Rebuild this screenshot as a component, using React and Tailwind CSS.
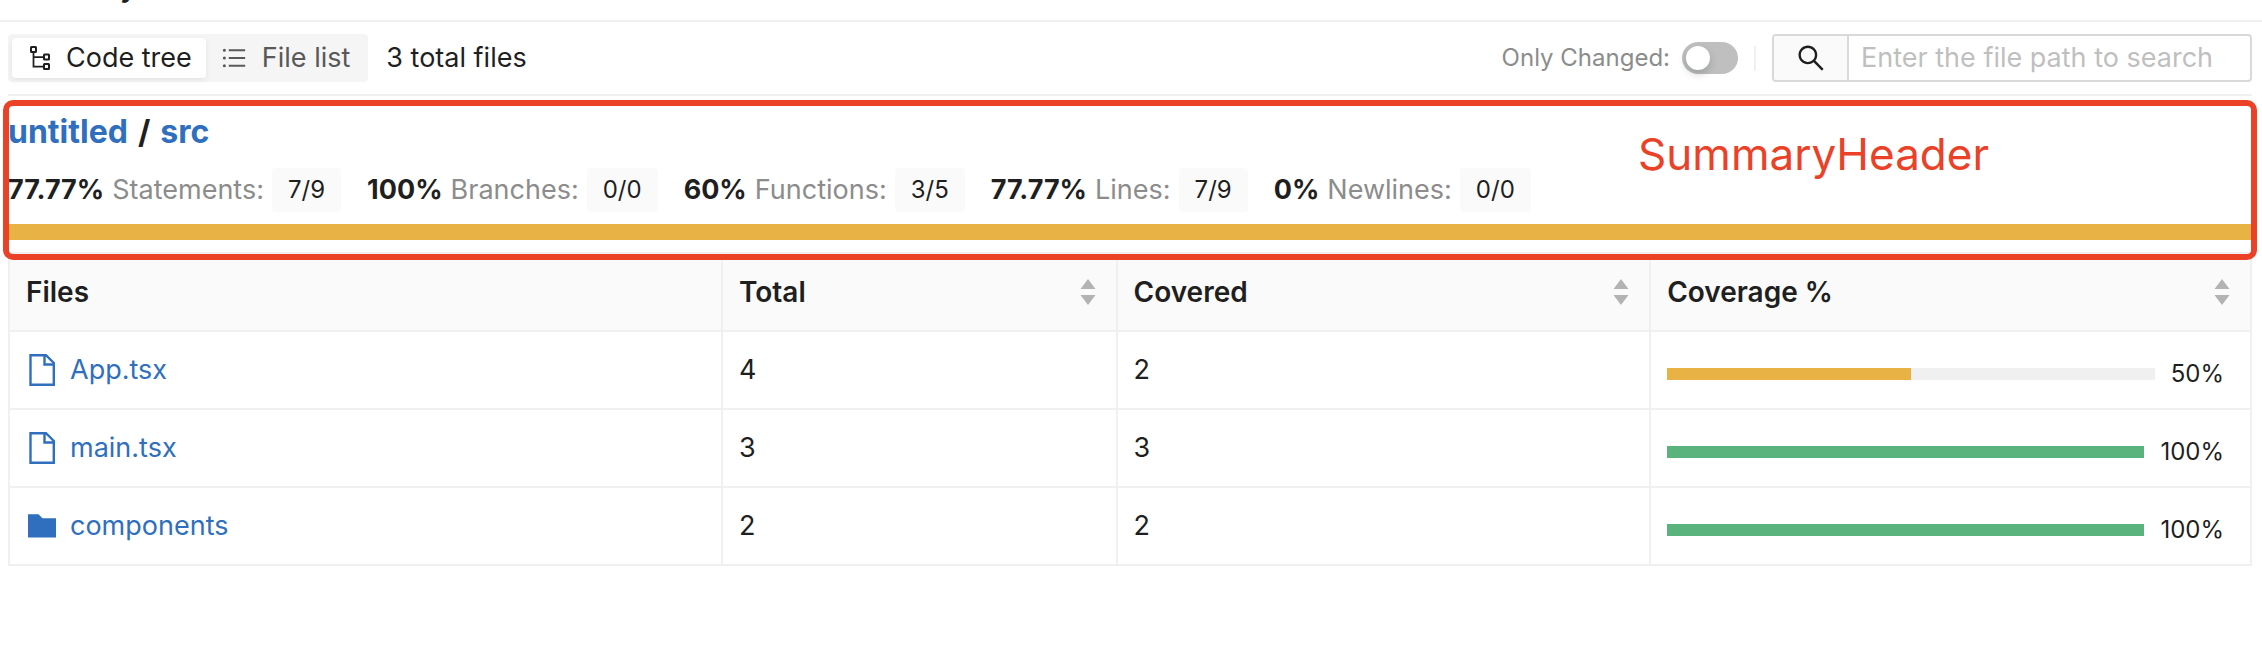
import React, { useState } from 'react';
import { AiOutlineSearch, AiOutlineUnorderedList } from 'react-icons/ai';

const summary = [
  { label: 'Statements', percent: '77.77%', ratio: '7/9' },
  { label: 'Branches', percent: '100%', ratio: '0/0' },
  { label: 'Functions', percent: '60%', ratio: '3/5' },
  { label: 'Lines', percent: '77.77%', ratio: '7/9' },
  { label: 'Newlines', percent: '0%', ratio: '0/0' },
];

const files = [
  { name: 'App.tsx', type: 'file', total: 4, covered: 2, percent: 50 },
  { name: 'main.tsx', type: 'file', total: 3, covered: 3, percent: 100 },
  { name: 'components', type: 'folder', total: 2, covered: 2, percent: 100 },
];

const TreeIcon = () => (
  <svg viewBox="0 0 20 24" className="h-6 w-5" fill="none" stroke="currentColor" strokeWidth="2">
    <rect x="1" y="1" width="5" height="5" rx="0.5" />
    <rect x="14" y="8.5" width="5" height="5" rx="0.5" />
    <rect x="14" y="18" width="5" height="5" rx="0.5" />
    <path d="M3.5 6v14.5H14M3.5 11H14" strokeWidth="1.75" />
  </svg>
);

const FileIcon = () => (
  <svg viewBox="0 0 32 32" className="h-8 w-8" fill="none" stroke="currentColor" strokeWidth="2.4">
    <path d="M4.5 1.2H20L27.8 9v21.8H4.5zM18.5 1v9.5h9" />
  </svg>
);

const FolderIcon = () => (
  <svg viewBox="0 0 32 32" className="h-8 w-8" fill="currentColor">
    <path d="M2 4.2h10.5l4 4H30v19.3H2z" />
  </svg>
);

const SortIcon = () => (
  <svg viewBox="0 0 16 26" className="h-[26px] w-4" fill="#b3b3b3">
    <path d="M8 0l7.5 10H.5zM8 26L.5 16h15z" />
  </svg>
);

const Toolbar = () => {
  const [view, setView] = useState('tree');
  const [onlyChanged, setOnlyChanged] = useState(false);
  const [keyword, setKeyword] = useState('');

  const tabClass = (active) =>
    active
      ? 'flex h-10 items-center rounded bg-white pl-[18px] pr-3.5 shadow-[0_2px_6px_rgba(0,0,0,0.08)]'
      : 'flex h-10 items-center rounded pl-3.5 pr-3.5 text-[#595959]';

  return (
    <div className="flex items-center justify-between border-b-2 border-[#f0f0f0] py-3 text-[27px]">
      <div className="flex items-center gap-[18px]">
        <div className="flex h-12 items-center rounded bg-[#f5f5f5] p-1">
          <button type="button" onClick={() => setView('tree')} className={tabClass(view === 'tree')}>
            <TreeIcon />
            <span className="ml-4">Code tree</span>
          </button>
          <button type="button" onClick={() => setView('list')} className={tabClass(view === 'list')}>
            <AiOutlineUnorderedList className="h-7 w-7" />
            <span className="ml-3.5">File list</span>
          </button>
        </div>
        <span>3 total files</span>
      </div>

      <div className="flex items-center">
        <label htmlFor="only-changed" className="mr-3 text-2xl text-[#8c8c8c]">
          Only Changed:
        </label>
        <input
          id="only-changed"
          type="checkbox"
          role="switch"
          checked={onlyChanged}
          onChange={(e) => setOnlyChanged(e.target.checked)}
          className="flex h-8 w-14 appearance-none rounded-full bg-[#bfbfbf] p-1 before:h-6 before:w-6 before:rounded-full before:bg-white before:shadow-[0_4px_8px_rgba(0,35,11,0.2)] checked:justify-end checked:bg-[#2f6fbd]"
        />
        <span className="mx-4 h-[25px] w-0.5 bg-[#f0f0f0]"></span>
        <div className="flex h-12 w-[480px] overflow-hidden rounded border-2 border-[#d9d9d9]">
          <button
            type="button"
            aria-label="Search"
            className="flex w-[75px] shrink-0 items-center justify-center border-r-2 border-[#d9d9d9] bg-[#fafafa]"
          >
            <AiOutlineSearch className="h-8 w-8" />
          </button>
          <input
            type="text"
            aria-label="File path"
            value={keyword}
            onChange={(e) => setKeyword(e.target.value)}
            placeholder="Enter the file path to search"
            className="min-w-0 grow px-3 outline-none placeholder:text-[#bfbfbf]"
          />
        </div>
      </div>
    </div>
  );
};

const SummaryHeader = () => (
  <section className="relative flex flex-col gap-3 py-3">
    <h2 className="text-[32px] leading-[48px] font-bold">
      <a href="#untitled" className="text-[#2f6fbd]">untitled</a>
      <span className="mx-2.5">/</span>
      <a href="#src" className="text-[#2f6fbd]">src</a>
    </h2>

    <div className="flex gap-[26px] text-[27px]">
      {summary.map((item) => (
        <div key={item.label} className="flex h-11 items-center gap-2">
          <span className="font-bold">{item.percent}</span>
          <span className="text-[#8c8c8c]">{item.label}:</span>
          <span className="flex h-11 items-center rounded bg-[#fafafa] px-4 text-2xl">{item.ratio}</span>
        </div>
      ))}
    </div>

    <div className="h-4 bg-[#e9b245]"></div>

    {/* Callout frame over the section */}
    <div className="pointer-events-none absolute -inset-x-[5px] top-1 -bottom-2 rounded-[10px] border-6 border-[#eb4127]">
      <span className="absolute top-4 right-[262px] text-[44px] leading-[64px] text-[#eb4127]">SummaryHeader</span>
    </div>
  </section>
);

const HeadCell = ({ title, sortable }) => (
  <th
    scope="col"
    className="h-[78px] border-r-2 border-b-2 border-[#f0f0f0] bg-[#fafafa] px-4 text-left text-[28px] font-semibold"
  >
    <div className="flex items-center justify-between">
      {title}
      {sortable && (
        <button type="button" aria-label={`Sort by ${title}`} className="mr-1">
          <SortIcon />
        </button>
      )}
    </div>
  </th>
);

const FileTable = () => (
  <table className="w-full table-fixed border-separate border-spacing-0 border-t-2 border-l-2 border-[#f0f0f0] text-[27px]">
    <colgroup>
      <col className="w-[31.8%]" />
      <col className="w-[17.6%]" />
      <col className="w-[23.8%]" />
      <col />
    </colgroup>
    <thead>
      <tr>
        <HeadCell title="Files" />
        <HeadCell title="Total" sortable />
        <HeadCell title="Covered" sortable />
        <HeadCell title="Coverage %" sortable />
      </tr>
    </thead>
    <tbody>
      {files.map((file) => (
        <tr key={file.name}>
          <td className="h-[78px] border-r-2 border-b-2 border-[#f0f0f0] px-4">
            <a href={`#${file.name}`} className="flex items-center gap-3 text-[#2f6fbd]">
              {file.type === 'file' ? <FileIcon /> : <FolderIcon />}
              {file.name}
            </a>
          </td>
          <td className="border-r-2 border-b-2 border-[#f0f0f0] px-4">{file.total}</td>
          <td className="border-r-2 border-b-2 border-[#f0f0f0] px-4">{file.covered}</td>
          <td className="border-r-2 border-b-2 border-[#f0f0f0] pt-2 pr-[26px] pl-4">
            <div className="flex items-center gap-4">
              <div className="h-3 grow bg-[#f0f0f0]">
                <div
                  className={file.percent < 80 ? 'h-full bg-[#e9b245]' : 'h-full bg-[#5ab27c]'}
                  style={{ width: `${file.percent}%` }}
                ></div>
              </div>
              <span className="text-2xl">{file.percent}%</span>
            </div>
          </td>
        </tr>
      ))}
    </tbody>
  </table>
);

const App = () => (
  <div className="min-h-screen bg-white font-['Inter',sans-serif] text-[#1f1f1f]">
    <header className="flex h-[22px] items-end overflow-hidden border-b-2 border-[#f0f0f0] pl-30">
      <span className="pb-3 text-[28px] font-semibold">y</span>
    </header>
    <main className="pr-2.5 pl-2">
      <Toolbar />
      <SummaryHeader />
      <FileTable />
    </main>
  </div>
);

export default App;
